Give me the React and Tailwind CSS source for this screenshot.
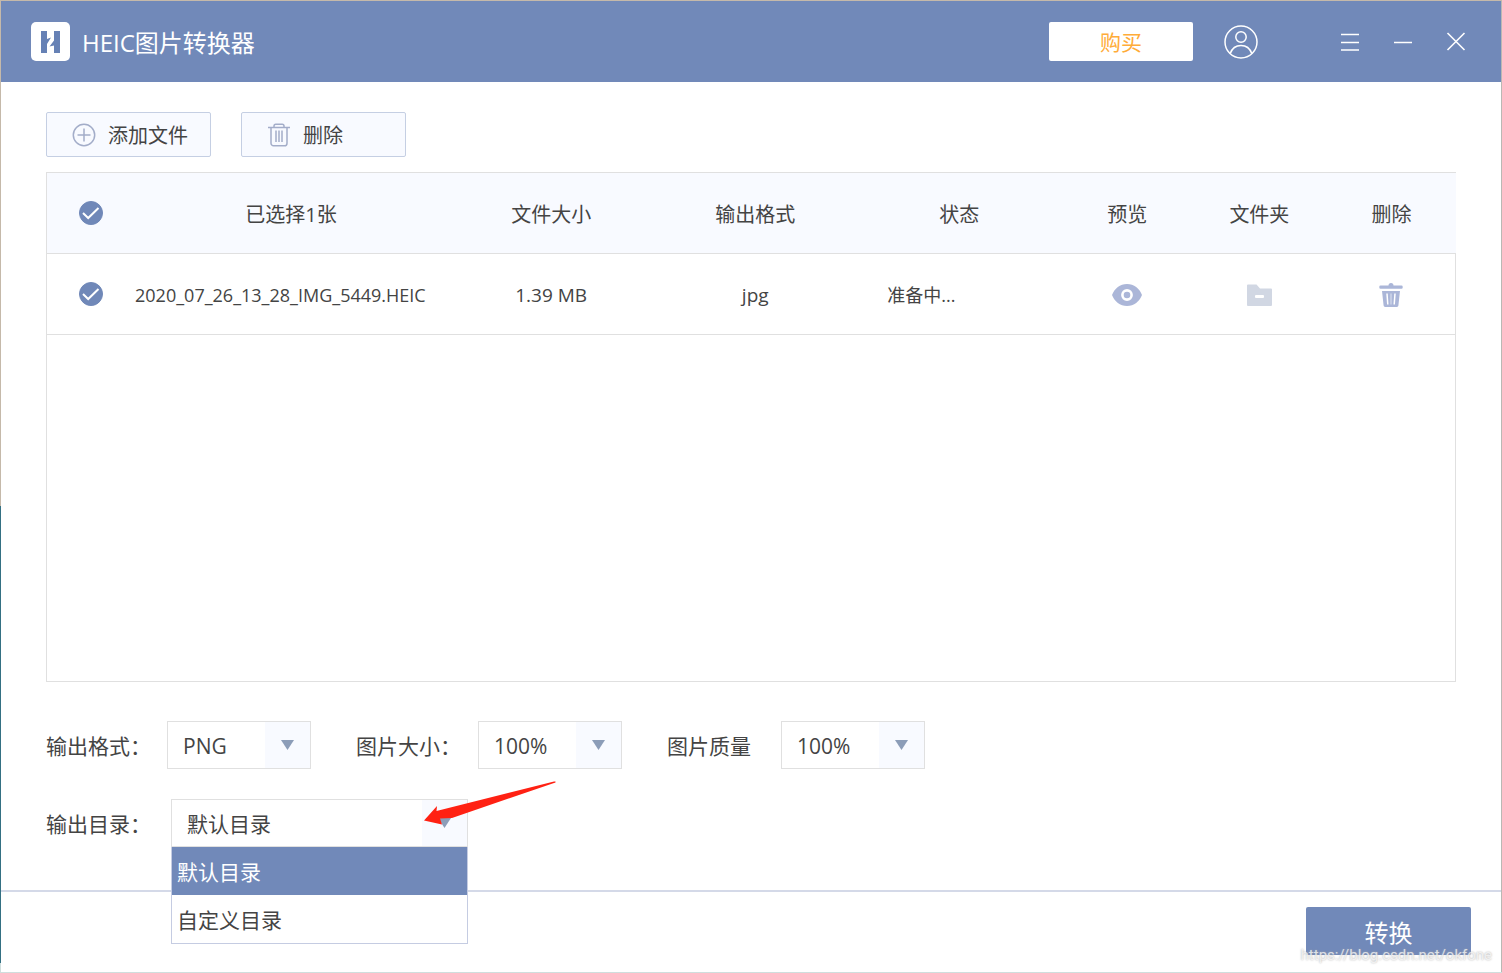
import React, { useState } from "react";

function Logo() {
  return (
    <svg className="size-[39px]" viewBox="0 0 39 39" aria-hidden="true">
      <rect width="39" height="39" rx="5" fill="#fff" />
      <path d="M10 9h6v8l4-1.500-4 6.500V31h-6z" fill="#6681b5" />
      <path d="M29 9h-6v9.500l-4.500 6 4.500-1V31h6z" fill="#6681b5" />
    </svg>
  );
}

function UserIcon() {
  return (
    <svg className="size-[34px]" viewBox="0 0 34 34" fill="none" stroke="#fff" strokeWidth="1.500" aria-hidden="true">
      <circle cx="17" cy="17" r="16" />
      <circle cx="17" cy="12" r="5.200" />
      <path d="M6.200 28.500C8 23.500 12 20.500 17 20.500s9 3 10.800 8" />
    </svg>
  );
}

function MenuIcon() {
  return (
    <svg className="size-5" viewBox="0 0 20 20" stroke="#fff" strokeWidth="1.500" aria-hidden="true">
      <path d="M1 2.500h18M1 10.500h18M1 18h18" />
    </svg>
  );
}

function MinimizeIcon() {
  return (
    <svg className="size-5" viewBox="0 0 20 20" stroke="#fff" strokeWidth="1.500" aria-hidden="true">
      <path d="M1 10.500h18" />
    </svg>
  );
}

function CloseIcon() {
  return (
    <svg className="size-5" viewBox="0 0 20 20" stroke="#fff" strokeWidth="1.600" aria-hidden="true">
      <path d="M1.500 1l17 17M18.500 1l-17 17" />
    </svg>
  );
}

function PlusIcon() {
  return (
    <svg className="size-6" viewBox="0 0 24 24" fill="none" stroke="#a3adc9" strokeWidth="1.500" aria-hidden="true">
      <circle cx="12" cy="12" r="10.700" />
      <path d="M5.500 12h13M12 5.500v13" />
    </svg>
  );
}

function BinOutlineIcon() {
  return (
    <svg className="size-6" viewBox="0 0 24 24" fill="none" stroke="#a3adc9" strokeWidth="1.500" aria-hidden="true">
      <path d="M1 4.500h22M7 4.500V3a1.800 1.800 0 0 1 1.800-1.800h6.400A1.800 1.800 0 0 1 17 3v1.500M4 4.500v15.700a2.600 2.600 0 0 0 2.600 2.600h10.800a2.600 2.600 0 0 0 2.600-2.600V4.500M9 7.500v11.500M12 7.500v11.500M15 7.500v11.500" />
    </svg>
  );
}

function EyeIcon() {
  return (
    <svg className="h-[22px] w-[30px]" viewBox="0 0 30 22" aria-hidden="true">
      <path d="M15 0C8 0 2.500 4.500 0 11c2.500 6.500 8 11 15 11s12.500-4.500 15-11C27.500 4.500 22 0 15 0z" fill="#abb6d8" />
      <circle cx="15" cy="11" r="4.600" fill="#abb6d8" stroke="#fff" strokeWidth="2.600" />
    </svg>
  );
}

function FolderIcon() {
  return (
    <svg className="h-[22px] w-[25px]" viewBox="0 0 25 22" aria-hidden="true">
      <path d="M1 .500h8.500l3.500 4h11a1 1 0 0 1 1 1V21a1 1 0 0 1-1 1H1a1 1 0 0 1-1-1V1.500a1 1 0 0 1 1-1z" fill="#d1d7e3" />
      <rect x="8" y="11" width="9" height="3" rx="1" fill="#fff" />
    </svg>
  );
}

function BinIcon() {
  return (
    <svg className="size-6" viewBox="0 0 24 24" aria-hidden="true">
      <path d="M9.500 2.500a2.500 2.500 0 0 1 5 0h8a1.200 1.200 0 0 1 1.200 1.200v.800a1.200 1.200 0 0 1-1.200 1.200h-21A1.200 1.200 0 0 1 .300 4.500v-.800A1.200 1.200 0 0 1 1.500 2.500z" fill="#abb6d8" />
      <path d="M3 8h18l-1.600 14.600a1.500 1.500 0 0 1-1.500 1.400H6.100a1.500 1.500 0 0 1-1.500-1.400z" fill="#abb6d8" />
      <path d="M8 10.500l.8 11M16 10.500l-.8 11" stroke="#fff" strokeWidth="1.500" />
      <path d="M12 10.500v11" stroke="#dfe4f1" strokeWidth="1" />
    </svg>
  );
}

function RoundCheck({ label, checked, onChange }) {
  return (
    <label className="mx-auto grid size-6">
      <input
        type="checkbox"
        aria-label={label}
        checked={checked}
        onChange={onChange}
        className="col-start-1 row-start-1 size-6 appearance-none rounded-full border border-[#7088b8] checked:bg-[#7088b8]"
      />
      <svg className="pointer-events-none col-start-1 row-start-1 size-6" viewBox="0 0 24 24" fill="none" stroke="#fff" strokeWidth="2" aria-hidden="true">
        {checked && <path d="M4 12l5.200 5L19.500 7" />}
      </svg>
    </label>
  );
}

function Picker({ id, value, options, onChange, className }) {
  return (
    <div className={"relative h-12 " + className}>
      <select
        id={id}
        value={value}
        onChange={(e) => onChange(e.target.value)}
        className="size-full appearance-none border border-[#e0e0e0] bg-white pt-1 pl-[15px] text-[21px] text-[#444]"
      >
        {options.map((o) => (
          <option key={o}>{o}</option>
        ))}
      </select>
      <span className="pointer-events-none absolute inset-y-px right-px flex w-[45px] items-center justify-center bg-[#f8faff]">
        <svg className="h-[10px] w-[13px]" viewBox="0 0 13 10" aria-hidden="true">
          <path d="M0 0h13L6.500 10z" fill="#8c9db8" />
        </svg>
      </span>
    </div>
  );
}

const columns = [
  ["文件大小", "w-[208px]"],
  ["输出格式", "w-[200px]"],
  ["状态", "w-[208px]"],
  ["预览", "w-[128px]"],
  ["文件夹", "w-[136px]"],
  ["删除", "w-[128px]"],
];

const toolButton =
  "flex h-[45px] w-[165px] items-center gap-3 rounded-xs border border-[#c5cfe3] bg-[#f8faff] pl-[25px] text-[20px] text-[#444]";

export default function App() {
  const [checked, setChecked] = useState(true);
  const [format, setFormat] = useState("PNG");
  const [size, setSize] = useState("100%");
  const [quality, setQuality] = useState("100%");
  const [folder, setFolder] = useState("默认目录");
  const toggle = () => setChecked(!checked);

  return (
    <div className="flex min-h-screen bg-[linear-gradient(#c5b9aa_0_52%,#347083_52%_99%,#cfdedd_99%)] font-['Open_Sans','Noto_Sans_CJK_SC',sans-serif] text-[#444]">
      <div className="my-px ml-px flex flex-1 flex-col border-r border-[#b9b8b4] bg-white">
        <header className="flex h-[81px] items-center bg-[#7189b9] pr-[35px] pl-[30px] text-white">
          <Logo />
          <h1 className="ml-3 pt-[3px] text-[24px]">HEIC图片转换器</h1>
          <button className="ml-auto h-[39px] w-36 rounded-xs bg-white pt-[2px] text-[21px] text-[#ffac38]">购买</button>
          <button aria-label="账户" className="ml-[31px]"><UserIcon /></button>
          <div className="ml-[82px] flex gap-[33px]">
            <button aria-label="菜单"><MenuIcon /></button>
            <button aria-label="最小化"><MinimizeIcon /></button>
            <button aria-label="关闭"><CloseIcon /></button>
          </div>
        </header>

        <main className="flex flex-1 flex-col px-[45px] pt-[30px] pb-[43px]">
          <div className="flex gap-[30px]">
            <button className={toolButton}><PlusIcon /><span className="pt-[3px]">添加文件</span></button>
            <button className={toolButton}><BinOutlineIcon /><span className="pt-[3px]">删除</span></button>
          </div>

          <div className="mt-[15px] flex flex-1 flex-col border-y border-l border-[#e0e0e0] text-[20px]">
            <table className="w-full table-fixed border-collapse text-center">
              <thead>
                <tr className="h-20 border-b border-[#e0e0e0] bg-[#f8faff]">
                  <th className="w-[88px]"><RoundCheck label="全选" checked={checked} onChange={toggle} /></th>
                  <th className="w-[312px] pt-[5px] font-normal">已选择1张</th>
                  {columns.map(([name, width]) => (
                    <th key={name} className={"pt-[5px] font-normal " + width}>{name}</th>
                  ))}
                </tr>
              </thead>
              <tbody>
                <tr className="h-[81px] border-b border-[#e0e0e0] text-[19px]">
                  <td><RoundCheck label="选择文件" checked={checked} onChange={toggle} /></td>
                  <td className="pt-1 text-left text-[18px] whitespace-nowrap">2020_07_26_13_28_IMG_5449.HEIC</td>
                  <td className="pt-1">1.39 MB</td>
                  <td className="pt-1">jpg</td>
                  <td className="pt-1 pl-8 text-left text-[18px]">准备中...</td>
                  <td><button aria-label="预览" className="align-middle"><EyeIcon /></button></td>
                  <td><button aria-label="文件夹" className="align-middle"><FolderIcon /></button></td>
                  <td className="border-r border-[#e0e0e0]"><button aria-label="删除" className="align-middle"><BinIcon /></button></td>
                </tr>
              </tbody>
            </table>
            <div className="flex-1 border-r border-[#e0e0e0]" />
          </div>

          <div className="mt-[39px] flex items-center text-[21px]">
            <label htmlFor="format" className="w-[121px] pt-1">输出格式：</label>
            <Picker id="format" value={format} onChange={setFormat} options={["PNG", "JPG"]} className="w-36" />
            <label htmlFor="size" className="ml-[45px] w-[122px] pt-1">图片大小：</label>
            <Picker id="size" value={size} onChange={setSize} options={["100%", "75%", "50%"]} className="w-36" />
            <label htmlFor="quality" className="ml-[45px] w-[114px] pt-1">图片质量</label>
            <Picker id="quality" value={quality} onChange={setQuality} options={["100%", "75%", "50%"]} className="w-36" />
          </div>

          <div className="mt-[30px] flex items-center text-[21px]">
            <label htmlFor="folder" className="w-[125px] pt-1">输出目录：</label>
            <div className="relative">
              <Picker id="folder" value={folder} onChange={setFolder} options={["默认目录", "自定义目录"]} className="w-[297px]" />
              <ul role="listbox" aria-label="输出目录" className="absolute top-12 left-0 z-10 w-full border border-t-0 border-[#c5cce2] bg-white">
                {["默认目录", "自定义目录"].map((o) => (
                  <li
                    key={o}
                    role="option"
                    aria-selected={o === folder}
                    onClick={() => setFolder(o)}
                    className="flex h-12 items-center px-[5px] pt-[3px] aria-selected:bg-[#7189b9] aria-selected:text-white"
                  >
                    {o}
                  </li>
                ))}
              </ul>
              <svg className="pointer-events-none absolute -top-[18px] left-[253px] z-20 h-[45px] w-[132px]" viewBox="0 0 132 45" aria-hidden="true">
                <path d="M0 39.500L13 25l-.5 5L130 .500h1.500v1L28 37l-12 .500 2 6z" fill="#ff2113" />
              </svg>
            </div>
          </div>
        </main>

        <footer className="relative flex h-[82px] justify-end border-t-2 border-[#d4d9e8] pt-[15px] pr-[30px]">
          <button className="h-12 w-[165px] rounded-xs bg-[#7189b9] pt-[3px] text-[24px] text-white">转换</button>
          <span className="pointer-events-none absolute right-[9px] bottom-[6px] font-['Roboto',sans-serif] text-[15px] text-white/70 [text-shadow:0_0_2px_#aaa]">https://blog.csdn.net/okfone</span>
        </footer>
      </div>
    </div>
  );
}
